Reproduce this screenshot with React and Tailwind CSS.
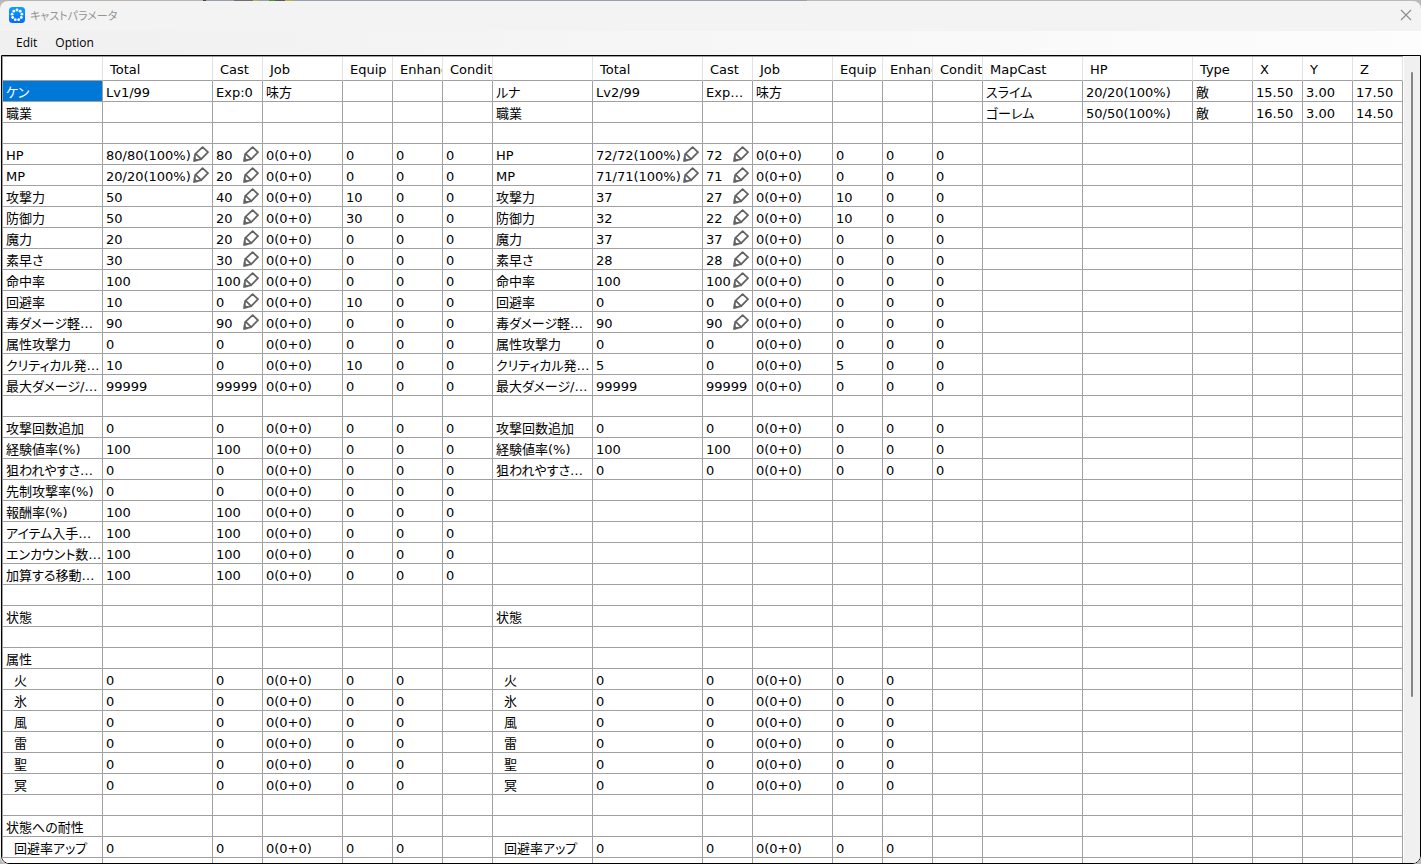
import React from "react";

const HERO_COLS = ["", "Total", "Cast", "Job", "Equip", "Enhanc", "Condit"];
const MAP_COLS = ["MapCast", "HP", "Type", "X", "Y", "Z"];
const HERO_WIDTHS = ["w-[100px]", "w-[110px]", "w-[50px]", "w-[80px]", "w-[50px]", "w-[50px]", "w-[50px]"];
const MAP_WIDTHS = ["w-[100px]", "w-[110px]", "w-[60px]", "w-[50px]", "w-[50px]", "w-[50px]"];

const JOB = "0(0+0)";
const EMPTY = ["", "", "", "", "", "", ""];
const label = (name) => [name, "", "", "", "", "", ""];
const stat = (name, total, cast, equip = "0") => [name, total, cast, JOB, equip, "0", "0"];
const resist = (name) => [name, "0", "0", JOB, "0", "0", ""];

const RESISTS = ["火", "氷", "風", "雷", "聖", "冥"].map(resist);

const KEN = [
  ["ケン", "Lv1/99", "Exp:0", "味方", "", "", ""],
  label("職業"),
  EMPTY,
  stat("HP", "80/80(100%)", "80"),
  stat("MP", "20/20(100%)", "20"),
  stat("攻撃力", "50", "40", "10"),
  stat("防御力", "50", "20", "30"),
  stat("魔力", "20", "20"),
  stat("素早さ", "30", "30"),
  stat("命中率", "100", "100"),
  stat("回避率", "10", "0", "10"),
  stat("毒ダメージ軽…", "90", "90"),
  stat("属性攻撃力", "0", "0"),
  stat("クリティカル発…", "10", "0", "10"),
  stat("最大ダメージ/…", "99999", "99999"),
  EMPTY,
  stat("攻撃回数追加", "0", "0"),
  stat("経験値率(%)", "100", "100"),
  stat("狙われやすさ…", "0", "0"),
  stat("先制攻撃率(%)", "0", "0"),
  stat("報酬率(%)", "100", "100"),
  stat("アイテム入手…", "100", "100"),
  stat("エンカウント数…", "100", "100"),
  stat("加算する移動…", "100", "100"),
  EMPTY,
  label("状態"),
  EMPTY,
  label("属性"),
  ...RESISTS,
  EMPTY,
  label("状態への耐性"),
  resist("回避率アップ"),
  EMPTY,
];

const LUNA = [
  ["ルナ", "Lv2/99", "Exp…", "味方", "", "", ""],
  label("職業"),
  EMPTY,
  stat("HP", "72/72(100%)", "72"),
  stat("MP", "71/71(100%)", "71"),
  stat("攻撃力", "37", "27", "10"),
  stat("防御力", "32", "22", "10"),
  stat("魔力", "37", "37"),
  stat("素早さ", "28", "28"),
  stat("命中率", "100", "100"),
  stat("回避率", "0", "0"),
  stat("毒ダメージ軽…", "90", "90"),
  stat("属性攻撃力", "0", "0"),
  stat("クリティカル発…", "5", "0", "5"),
  stat("最大ダメージ/…", "99999", "99999"),
  EMPTY,
  stat("攻撃回数追加", "0", "0"),
  stat("経験値率(%)", "100", "100"),
  stat("狙われやすさ…", "0", "0"),
  EMPTY,
  EMPTY,
  EMPTY,
  EMPTY,
  EMPTY,
  EMPTY,
  label("状態"),
  EMPTY,
  EMPTY,
  ...RESISTS,
  EMPTY,
  EMPTY,
  resist("回避率アップ"),
  EMPTY,
];

const MAP_CASTS = [
  ["スライム", "20/20(100%)", "敵", "15.50", "3.00", "17.50"],
  ["ゴーレム", "50/50(100%)", "敵", "16.50", "3.00", "14.50"],
];
const NO_CAST = ["", "", "", "", "", ""];

const isIndented = (row) => (row >= 28 && row <= 33) || row === 36;
const isEditable = (row, col) =>
  (col === 2 && row >= 3 && row <= 11) || (col === 1 && (row === 3 || row === 4));

function AppIcon() {
  const dots = Array.from({ length: 9 }, (_, i) => {
    const a = (i * Math.PI * 2) / 9 - Math.PI / 2;
    return [8 + 5 * Math.cos(a), 8 + 5 * Math.sin(a)];
  });
  return (
    <svg className="size-4 shrink-0" viewBox="0 0 16 16" aria-hidden="true">
      <defs>
        <linearGradient id="tile" x1="0" y1="0" x2="0" y2="1">
          <stop offset="0" stopColor="#0aa0ff" />
          <stop offset="1" stopColor="#0a6cf5" />
        </linearGradient>
      </defs>
      <rect width="16" height="16" rx="3.5" fill="url(#tile)" />
      {dots.map(([x, y], i) => (
        <circle key={i} cx={x} cy={y} r="1.4" fill="#fff" />
      ))}
    </svg>
  );
}

function PencilIcon() {
  return (
    <svg className="size-4" viewBox="0 0 16 16" fill="none" stroke="#636363" strokeWidth="1.8" aria-hidden="true">
      <path d="M2.6 7.6 9.6 1.2 15 6.2 8.2 13.2Z" strokeLinejoin="round" />
      <path d="M2.2 7.6 1.4 14.6 8.6 13.2" strokeLinejoin="miter" />
      <path d="M0.4 15.8 0.8 10.6 5.4 15Z" fill="#636363" stroke="none" />
    </svg>
  );
}

function Cell({ children, indented, editable, selected }) {
  return (
    <td
      className={
        "h-[21px] overflow-hidden border-r border-b border-[#a0a0a0] p-0 whitespace-nowrap " +
        (selected ? "bg-[#0078d7] text-white" : "")
      }
    >
      <div className={"flex h-5 items-center justify-between pr-[3px] " + (indented ? "pl-[11px]" : "pl-[3px]")}>
        <span className="pt-1 leading-4">{children}</span>
        {editable && (
          <button type="button" aria-label="Edit value" className="shrink-0">
            <PencilIcon />
          </button>
        )}
      </div>
    </td>
  );
}

function ParameterTable() {
  return (
    <table className="w-full min-w-[1401px] table-fixed border-separate border-spacing-0 border-t border-l border-[#a0a0a0] bg-white">
      <colgroup>
        {[...HERO_WIDTHS, ...HERO_WIDTHS, ...MAP_WIDTHS].map((w, i) => (
          <col key={i} className={w} />
        ))}
      </colgroup>
      <thead>
        <tr>
          {[...HERO_COLS, ...HERO_COLS, ...MAP_COLS].map((name, i) => (
            <th
              key={i}
              scope="col"
              className="h-6 border-r border-b border-r-[#e2e2e2] border-b-[#a0a0a0] p-0 text-left font-normal whitespace-nowrap"
            >
              <div className="overflow-hidden pt-0.5 pl-[7px] leading-5">{name}</div>
            </th>
          ))}
        </tr>
      </thead>
      <tbody>
        {KEN.map((ken, r) => (
          <tr key={r}>
            {ken.map((v, c) => (
              <Cell key={c} indented={c === 0 && isIndented(r)} editable={isEditable(r, c)} selected={r === 0 && c === 0}>
                {v}
              </Cell>
            ))}
            {LUNA[r].map((v, c) => (
              <Cell key={c + 7} indented={c === 0 && isIndented(r)} editable={isEditable(r, c)}>
                {v}
              </Cell>
            ))}
            {(MAP_CASTS[r] || NO_CAST).map((v, c) => (
              <Cell key={c + 14}>{v}</Cell>
            ))}
          </tr>
        ))}
      </tbody>
    </table>
  );
}

function Backdrop() {
  return (
    <div className="flex h-px shrink-0" aria-hidden="true">
      <span className="w-[203px] bg-[#b8b4b2]" />
      <span className="w-[3px] bg-[#4a4648]" />
      <span className="w-7 bg-[#96a0aa]" />
      <span className="w-[19px] bg-[#736d70]" />
      <span className="w-[5px] bg-[#b8b040]" />
      <span className="w-[11px] bg-[#96a0aa]" />
      <span className="w-1.5 bg-[#30a030]" />
      <span className="w-2.5 bg-[#5a5658]" />
      <span className="w-2 bg-[#b8b040]" />
      <span className="w-[514px] bg-[#96a0aa]" />
      <span className="flex-1 bg-[#bababa]" />
    </div>
  );
}

export default function App() {
  return (
    <div className="flex h-screen flex-col overflow-hidden bg-[#bababa] font-['DejaVu_Sans','Noto_Sans_CJK_JP',sans-serif] text-[13px] text-black">
      <Backdrop />
      <div className="flex min-h-0 flex-1 flex-col overflow-hidden rounded-lg bg-[#f3f3f3]">
        <header className="flex h-[30px] shrink-0 items-center justify-between px-[9px] pb-0.5">
          <div className="flex items-center gap-[5px]">
            <AppIcon />
            <h1 className="font-['Noto_Sans_CJK_JP',sans-serif] text-[11px] font-normal text-[#949494] [font-feature-settings:'palt']">
              キャストパラメータ
            </h1>
          </div>
          <button type="button" aria-label="Close">
            <svg className="size-3" viewBox="0 0 12 12" fill="none" stroke="#8c8c8c" strokeWidth="1.1" aria-hidden="true">
              <path d="M1 1 11 11M11 1 1 11" />
            </svg>
          </button>
        </header>
        <nav className="flex h-6 shrink-0 items-center gap-[18px] bg-linear-to-r from-[#f0f0f0] to-[#fdfdfd] pl-4 font-['Open_Sans',sans-serif] text-xs">
          <button type="button">Edit</button>
          <button type="button">Option</button>
        </nav>
        <main className="ml-px flex min-h-0 flex-1 overflow-hidden rounded-b-lg border border-black bg-white">
          <div className="min-w-0 flex-1 overflow-hidden [font-feature-settings:'palt']">
            <ParameterTable />
          </div>
          <div className="ml-px flex w-4 shrink-0 flex-col items-center bg-[#f0f0f0] pt-4" aria-hidden="true">
            <div className="h-[79%] w-0.5 rounded-full bg-[#858585]" />
          </div>
        </main>
      </div>
    </div>
  );
}
